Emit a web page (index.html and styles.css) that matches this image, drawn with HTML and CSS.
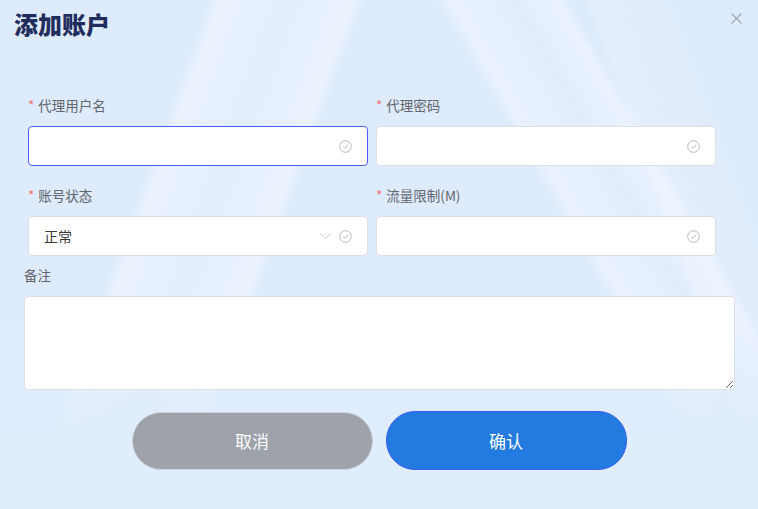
FILE: index.html
```html
<!DOCTYPE html>
<html lang="zh-CN">
<head>
    <meta charset="UTF-8">
    <meta name="viewport" content="width=device-width, initial-scale=1.0">
    <title>添加账户</title>
    <link rel="stylesheet" href="styles.css">
</head>
<body>

    <div class="dialog">
        <div class="dialog-header">
            <h2 class="dialog-title">添加账户</h2>
            <button class="dialog-close" aria-label="关闭">
                <svg width="11" height="11" viewBox="0 0 11 11">
                    <path d="M0.5 0.5 L10.5 10.5 M10.5 0.5 L0.5 10.5" stroke="#a2a6ae" stroke-width="1.1" fill="none"/>
                </svg>
            </button>
        </div>

        <form class="form-grid" onsubmit="return false">
            <div class="form-item">
                <label class="form-label"><span class="required">*</span>代理用户名</label>
                <div class="input-box is-focus">
                    <input type="text" class="input-inner">
                    <span class="input-suffix">
                        <svg class="icon-check" width="13" height="13" viewBox="0 0 13 13">
                            <circle cx="6.5" cy="6.5" r="5.8" stroke="#b5b8be" stroke-width="1" fill="none"/>
                            <path d="M3.9 6.6 L5.8 8.4 L9.2 4.6" stroke="#b5b8be" stroke-width="1" fill="none"/>
                        </svg>
                    </span>
                </div>
            </div>

            <div class="form-item">
                <label class="form-label"><span class="required">*</span>代理密码</label>
                <div class="input-box">
                    <input type="password" class="input-inner">
                    <span class="input-suffix">
                        <svg class="icon-check" width="13" height="13" viewBox="0 0 13 13">
                            <circle cx="6.5" cy="6.5" r="5.8" stroke="#b5b8be" stroke-width="1" fill="none"/>
                            <path d="M3.9 6.6 L5.8 8.4 L9.2 4.6" stroke="#b5b8be" stroke-width="1" fill="none"/>
                        </svg>
                    </span>
                </div>
            </div>

            <div class="form-item">
                <label class="form-label"><span class="required">*</span>账号状态</label>
                <div class="input-box">
                    <input type="text" class="input-inner" value="正常" readonly>
                    <span class="input-suffix">
                        <svg class="icon-arrow" width="11" height="6" viewBox="0 0 11 6">
                            <path d="M0.5 0.5 L5.5 5.3 L10.5 0.5" stroke="#c2c5ca" stroke-width="1" fill="none"/>
                        </svg>
                        <svg class="icon-check" width="13" height="13" viewBox="0 0 13 13">
                            <circle cx="6.5" cy="6.5" r="5.8" stroke="#b5b8be" stroke-width="1" fill="none"/>
                            <path d="M3.9 6.6 L5.8 8.4 L9.2 4.6" stroke="#b5b8be" stroke-width="1" fill="none"/>
                        </svg>
                    </span>
                </div>
            </div>

            <div class="form-item">
                <label class="form-label"><span class="required">*</span>流量限制(M)</label>
                <div class="input-box">
                    <input type="text" class="input-inner">
                    <span class="input-suffix">
                        <svg class="icon-check" width="13" height="13" viewBox="0 0 13 13">
                            <circle cx="6.5" cy="6.5" r="5.8" stroke="#b5b8be" stroke-width="1" fill="none"/>
                            <path d="M3.9 6.6 L5.8 8.4 L9.2 4.6" stroke="#b5b8be" stroke-width="1" fill="none"/>
                        </svg>
                    </span>
                </div>
            </div>
        </form>

        <div class="remark">
            <label class="form-label">备注</label>
            <textarea class="remark-input"></textarea>
        </div>

        <div class="dialog-footer">
            <button class="btn btn-cancel">取消</button>
            <button class="btn btn-confirm">确认</button>
        </div>
    </div>

</body>
</html>
```

FILE: styles.css
```css
* {
    box-sizing: border-box;
}

html, body {
    height: 100%;
}

body {
    margin: 0;
    font-family: "Noto Sans CJK SC", "Noto Sans", sans-serif;
    color: #606266;
    background-color: #deebfc;
    background-image:
        linear-gradient(to bottom, rgba(224, 237, 253, 0) 300px, #e0edfd 440px),
        linear-gradient(110deg, transparent 195px, rgba(255, 255, 255, 0.35) 208px, rgba(255, 255, 255, 0.14) 270px, rgba(255, 255, 255, 0.36) 332px, transparent 344px),
        linear-gradient(60deg, transparent 630px, rgba(255, 255, 255, 0.32) 644px, rgba(255, 255, 255, 0.12) 700px, rgba(255, 255, 255, 0.34) 738px, transparent 748px),
        linear-gradient(70deg, transparent 720px, rgba(255, 255, 255, 0.18) 730px, rgba(255, 255, 255, 0.05) 800px, transparent 812px);
    overflow: hidden;
}

.dialog {
    height: 100%;
}

.dialog-header {
    display: flex;
    justify-content: space-between;
    align-items: flex-start;
    padding: 8px 16px 0 14px;
}

.dialog-title {
    margin: 0;
    font-size: 24px;
    line-height: 31px;
    font-weight: 900;
    color: #1f2d5c;
}

.dialog-close {
    margin-top: 5px;
    padding: 0;
    border: none;
    background: none;
    cursor: pointer;
    line-height: 0;
}

.form-grid {
    display: grid;
    grid-template-columns: 348px 348px;
    row-gap: 20px;
    margin: 57px 0 0 24px;
}

.form-item {
    padding: 0 4px;
}

.form-label {
    display: block;
    font-size: 13.5px;
    line-height: 18px;
    color: #62656b;
    margin-bottom: 12px;
}

.required {
    color: #f56c6c;
    margin-right: 4px;
}

.input-box {
    display: flex;
    align-items: center;
    height: 40px;
    background: #ffffff;
    border: 1px solid #dcdfe6;
    border-radius: 4px;
    padding: 0 15px 0 15px;
}

.input-box.is-focus {
    border-color: #4d5ef2;
}

.input-inner {
    flex: 1;
    min-width: 0;
    height: 100%;
    border: none;
    outline: none;
    padding: 0;
    background: transparent;
    font-family: inherit;
    font-size: 14px;
    color: #3a3a3a;
}

.input-suffix {
    display: flex;
    align-items: center;
    gap: 8px;
}

.icon-check,
.icon-arrow {
    display: block;
}

.remark {
    margin: 10px 0 0 24px;
    width: 711px;
}

.remark-input {
    display: block;
    width: 100%;
    height: 94px;
    border: 1px solid #dcdfe6;
    border-radius: 4px;
    background: #ffffff;
    outline: none;
    resize: vertical;
    font-family: inherit;
    font-size: 14px;
    padding: 5px 15px;
}

.dialog-footer {
    display: flex;
    justify-content: center;
    align-items: center;
    gap: 13px;
    margin-top: 21px;
}

.btn {
    width: 241px;
    height: 58px;
    border-radius: 29px;
    font-family: inherit;
    font-size: 17px;
    color: #ffffff;
    cursor: pointer;
}

.btn-cancel {
    background: #9ea2ab;
    border: 1px solid #cdd1d9;
}

.btn-confirm {
    height: 59px;
    background: #237be0;
    border: 1px solid #3c5cf0;
}
```
